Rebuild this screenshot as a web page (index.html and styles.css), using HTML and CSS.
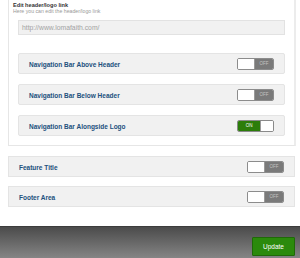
FILE: index.html
```html
<!DOCTYPE html>
<html>
<head>
<meta charset="utf-8">
<link rel="stylesheet" href="styles.css">
</head>
<body>
<div class="panel">
  <div class="field-label">Edit header/logo link</div>
  <div class="field-desc">Here you can edit the header/logo link</div>
  <div class="input">http://www.lomafaith.com/</div>
  <div class="option">
    <span class="title">Navigation Bar Above Header</span>
    <span class="toggle off"><span class="knob"></span><span class="state">OFF</span></span>
  </div>
  <div class="option">
    <span class="title">Navigation Bar Below Header</span>
    <span class="toggle off"><span class="knob"></span><span class="state">OFF</span></span>
  </div>
  <div class="option">
    <span class="title">Navigation Bar Alongside Logo</span>
    <span class="toggle on"><span class="state">ON</span><span class="knob"></span></span>
  </div>
</div>
<div class="section">
  <span class="title">Feature Title</span>
  <span class="toggle off"><span class="knob"></span><span class="state">OFF</span></span>
</div>
<div class="section">
  <span class="title">Footer Area</span>
  <span class="toggle off"><span class="knob"></span><span class="state">OFF</span></span>
</div>
<div class="bar">
  <button class="update">Update</button>
</div>
</body>
</html>
```
FILE: styles.css
```css
html, body {
  margin: 0;
  padding: 0;
  background: #ffffff;
  font-family: "Liberation Sans", Arial, sans-serif;
  width: 300px;
  height: 258px;
  overflow: hidden;
}
.panel {
  margin-left: 8px;
  width: 288px;
  box-sizing: border-box;
  background: #fff;
  border: 1px solid #e6e6e6;
  border-top: none;
  border-right: 2px solid #ececec;
  padding: 2px 4px 9px 4px;
}
.field-label {
  font-size: 5.6px;
  line-height: 6px;
  font-weight: bold;
  color: #333;
}
.field-desc {
  font-size: 5.2px;
  line-height: 6px;
  color: #999;
}
.input {
  margin: 6px 5px 0 5px;
  height: 15px;
  box-sizing: border-box;
  background: #f1f1f1;
  border: 1px solid #e2e2e2;
  font-size: 6.8px;
  line-height: 13px;
  color: #a3a3a3;
  padding-left: 3px;
}
.option {
  margin: 10px 5px 0 5px;
  height: 21px;
  box-sizing: border-box;
  background: #f1f1f1;
  border: 1px solid #e4e4e4;
  border-radius: 2px;
  display: flex;
  align-items: center;
  justify-content: space-between;
  padding: 1px 10px 0 10px;
}
.input + .option {
  margin-top: 18px;
}
.title {
  font-size: 6.5px;
  font-weight: bold;
  color: #22507d;
}
.section {
  margin: 10px 0 0 8px;
  width: 287px;
  height: 21px;
  box-sizing: border-box;
  background: #f1f1f1;
  border: 1px solid #e4e4e4;
  display: flex;
  align-items: center;
  justify-content: space-between;
  padding: 1px 10px 0 10px;
}
.section + .section {
  margin-top: 9px;
}
.toggle {
  display: flex;
  width: 37px;
  height: 12px;
  box-sizing: border-box;
  border: 1px solid #8c8c8c;
  border-radius: 2px;
  overflow: hidden;
  background: #fff;
}
.toggle.off .knob {
  width: 16px;
  background: #fff;
  border-right: 1px solid #9a9a9a;
}
.toggle.off .state {
  flex: 1;
  background: #7a7a7a;
  color: #c4c4c4;
  font-size: 4.5px;
  line-height: 10px;
  text-align: center;
}
.toggle.on {
  border-color: #8a8a8a;
}
.toggle.on .state {
  width: 22px;
  background: #2c7d0a;
  color: #fff;
  font-size: 4.5px;
  line-height: 10px;
  text-align: center;
}
.toggle.on .knob {
  flex: 1;
  background: #fff;
  border-left: 1px solid #9a9a9a;
}
.bar {
  margin-top: 19px;
  height: 32px;
  background: linear-gradient(#4b4b4b, #858585);
  border-top: 1px solid #3c3c3c;
  box-sizing: border-box;
  display: flex;
  justify-content: flex-end;
  padding: 10px 5px 0 0;
}
.update {
  width: 43px;
  height: 19px;
  box-sizing: border-box;
  background: #2b8a0c;
  border: 1px solid #1f6a07;
  color: #fff;
  font-family: "Liberation Sans", Arial, sans-serif;
  font-size: 6.5px;
  padding: 0;
  border-radius: 1px;
}
```
